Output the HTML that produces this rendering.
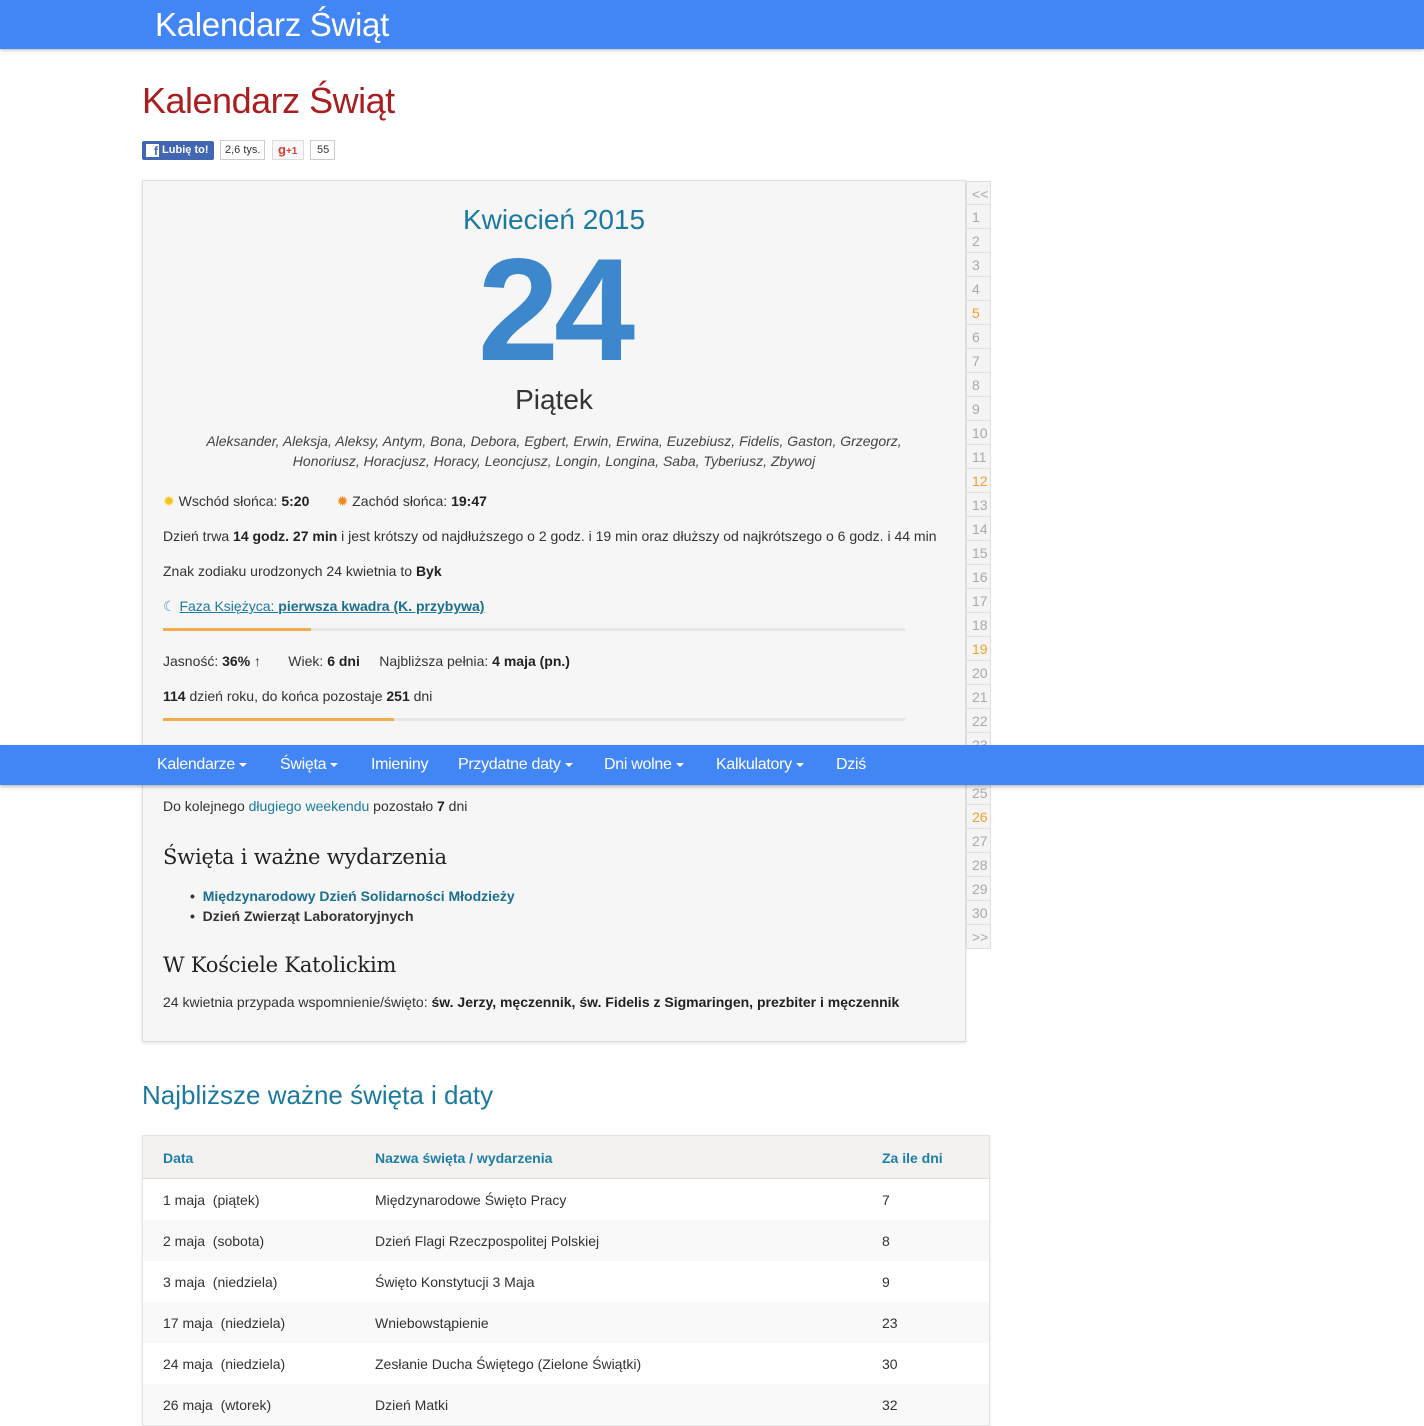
<!DOCTYPE html>
<html><head><meta charset="utf-8"><style>
*{margin:0;padding:0;box-sizing:border-box}
body{width:1424px;height:1424px;overflow:hidden;background:#fff;font-family:"Liberation Sans",Arial,sans-serif;color:#333;position:relative}
.a{position:absolute;white-space:nowrap}
.top{position:absolute;left:0;top:0;width:1424px;height:49px;background:#4285f4;box-shadow:0 1px 3px rgba(0,0,0,.3)}
.top span{position:absolute;left:155px;top:6px;font-size:33px;color:#fff;font-family:"Liberation Sans",sans-serif;letter-spacing:-0.3px}
.card{position:absolute;left:142px;top:180px;width:824px;height:862px;background:#f6f6f6;border:1px solid #ddd;box-shadow:0 1px 3px rgba(0,0,0,.12)}
.t{font-size:14px;color:#333}
b{color:#222}
.side{position:absolute;left:966px;top:181px;width:25px}
.side div{height:24px;border:1px solid #e0e0e0;border-top:none;background:#f4f4f4;color:#aaa;font-size:14px;padding:4px 0 0 5px}
.side div:first-child{border-top:1px solid #e0e0e0}
.side .o{color:#f0a030}
.nav{position:absolute;left:0;top:745px;width:1424px;height:40px;background:#4285f4;box-shadow:0 2px 3px rgba(0,0,0,.25)}
.nav span{position:absolute;top:11px;color:#fff;font-size:16px;letter-spacing:-0.3px}
.car{display:inline-block;border-left:4px solid transparent;border-right:4px solid transparent;border-top:4px solid #fff;vertical-align:middle;margin-left:4px}
.tbl{position:absolute;left:142px;top:1135px;width:848px;border:1px solid #e4e4e4;box-shadow:0 1px 3px rgba(0,0,0,.1)}
.row{height:41px;position:relative;font-size:14px;color:#333}
.row span{position:absolute;top:13px}
.hd{background:#f3f2f0;height:43px;border-bottom:1px solid #ddd;color:#1e7fa8;font-weight:bold}
.alt{background:#f9f9f9}
.bar{position:absolute;left:163px;width:742px;height:3px;background:#e6e6e6}
.bar i{display:block;height:3px;background:#f0ad4e}
h3{font-family:"DejaVu Serif","Liberation Serif",serif;font-weight:normal;font-size:21px;color:#222;letter-spacing:-0.2px}
</style></head><body>
<div class="top"><span>Kalendarz Świąt</span></div>
<div class="a" style="left:142px;top:80px;font-size:36px;color:#a91f1f;font-family:'Liberation Sans',sans-serif;letter-spacing:-0.5px">Kalendarz Świąt</div>
<div class="a" style="left:142px;top:141px;width:72px;height:19px;background:#4267b2;border-radius:2px;color:#fff;font-size:11px;font-weight:bold;padding:3px 0 0 4px"><span style="display:inline-block;width:13px;height:13px;background:#fff;color:#4267b2;font-size:12px;text-align:right;padding-right:1px;line-height:15px;vertical-align:-2px">f</span> Lubię to!</div>
<div class="a" style="left:220px;top:140px;width:45px;height:20px;border:1px solid #ccc;font-size:11px;color:#333;padding:3px 0 0 4px">2,6 tys.</div>
<div class="a" style="left:272px;top:140px;width:32px;height:20px;border:1px solid #ddd;background:#f8f8f8;font-size:13px;color:#d73d32;font-weight:bold;padding:1px 0 0 5px">g<span style="font-size:10px">+1</span></div>
<div class="a" style="left:310px;top:140px;width:25px;height:20px;border:1px solid #ccc;font-size:11px;color:#333;padding:3px 0 0 6px">55</div>

<div class="card"></div>
<div class="a" style="left:142px;width:824px;top:204px;text-align:center;font-size:28px;color:#1b7a9e">Kwiecień 2015</div>
<div class="a" style="left:142px;width:824px;top:226px;text-align:center;font-size:146px;font-weight:bold;color:#3d87cc;letter-spacing:-5px">24</div>
<div class="a" style="left:142px;width:824px;top:384px;text-align:center;font-size:28px;color:#333">Piątek</div>
<div class="a" style="left:142px;width:824px;top:431px;text-align:center;font-size:14px;font-style:italic;color:#444;line-height:20px;white-space:normal">Aleksander, Aleksja, Aleksy, Antym, Bona, Debora, Egbert, Erwin, Erwina, Euzebiusz, Fidelis, Gaston, Grzegorz,<br>Honoriusz, Horacjusz, Horacy, Leoncjusz, Longin, Longina, Saba, Tyberiusz, Zbywoj</div>
<div class="a t" style="left:163px;top:493px"><span style="color:#f6c21c">✹</span> Wschód słońca: <b>5:20</b> &nbsp; &nbsp; &nbsp; <span style="color:#f08a1c">✹</span> Zachód słońca: <b>19:47</b></div>
<div class="a t" style="left:163px;top:528px">Dzień trwa <b>14 godz. 27 min</b> i jest krótszy od najdłuższego o 2 godz. i 19 min oraz dłuższy od najkrótszego o 6 godz. i 44 min</div>
<div class="a t" style="left:163px;top:563px">Znak zodiaku urodzonych 24 kwietnia to <b>Byk</b></div>
<div class="a t" style="left:163px;top:598px;color:#1b7a9e"><span style="color:#5a8fd0">☾</span> <u>Faza Księżyca: <b style="color:#1b6f8e">pierwsza kwadra (K. przybywa)</b></u></div>
<div class="bar" style="top:628px"><i style="width:148px"></i></div>
<div class="a t" style="left:163px;top:653px">Jasność: <b>36%</b> ↑ &nbsp; &nbsp; &nbsp; Wiek: <b>6 dni</b> &nbsp; &nbsp; Najbliższa pełnia: <b>4 maja (pn.)</b></div>
<div class="a t" style="left:163px;top:688px"><b>114</b> dzień roku, do końca pozostaje <b>251</b> dni</div>
<div class="bar" style="top:718px"><i style="width:231px"></i></div>
<div class="a t" style="left:163px;top:798px">Do kolejnego <span style="color:#1b7a9e">długiego weekendu</span> pozostało <b>7</b> dni</div>
<h3 class="a" style="left:163px;top:845px">Święta i ważne wydarzenia</h3>
<div class="a t" style="left:190px;top:886px;font-weight:bold;line-height:20px">•&nbsp; <span style="color:#1b6f8e">Międzynarodowy Dzień Solidarności Młodzieży</span><br>•&nbsp; Dzień Zwierząt Laboratoryjnych</div>
<h3 class="a" style="left:163px;top:953px">W Kościele Katolickim</h3>
<div class="a t" style="left:163px;top:994px">24 kwietnia przypada wspomnienie/święto: <b>św. Jerzy, męczennik, św. Fidelis z Sigmaringen, prezbiter i męczennik</b></div>

<div class="side">
<div>&lt;&lt;</div><div>1</div><div>2</div><div>3</div><div>4</div><div class="o">5</div><div>6</div><div>7</div><div>8</div><div>9</div><div>10</div><div>11</div><div class="o">12</div><div>13</div><div>14</div><div>15</div><div>16</div><div>17</div><div>18</div><div class="o">19</div><div>20</div><div>21</div><div>22</div><div>23</div><div>24</div><div>25</div><div class="o">26</div><div>27</div><div>28</div><div>29</div><div>30</div><div>&gt;&gt;</div>
</div>

<div class="nav">
<span style="left:157px">Kalendarze<i class="car"></i></span>
<span style="left:280px">Święta<i class="car"></i></span>
<span style="left:371px">Imieniny</span>
<span style="left:458px">Przydatne daty<i class="car"></i></span>
<span style="left:604px">Dni wolne<i class="car"></i></span>
<span style="left:716px">Kalkulatory<i class="car"></i></span>
<span style="left:836px">Dziś</span>
</div>

<div class="a" style="left:142px;top:1080px;font-size:26px;color:#1b7a9e">Najbliższe ważne święta i daty</div>
<div class="tbl">
<div class="row hd"><span style="left:20px;top:14px">Data</span><span style="left:232px;top:14px">Nazwa święta / wydarzenia</span><span style="left:739px;top:14px">Za ile dni</span></div>
<div class="row"><span style="left:20px">1 maja&nbsp; (piątek)</span><span style="left:232px">Międzynarodowe Święto Pracy</span><span style="left:739px">7</span></div>
<div class="row alt"><span style="left:20px">2 maja&nbsp; (sobota)</span><span style="left:232px">Dzień Flagi Rzeczpospolitej Polskiej</span><span style="left:739px">8</span></div>
<div class="row"><span style="left:20px">3 maja&nbsp; (niedziela)</span><span style="left:232px">Święto Konstytucji 3 Maja</span><span style="left:739px">9</span></div>
<div class="row alt"><span style="left:20px">17 maja&nbsp; (niedziela)</span><span style="left:232px">Wniebowstąpienie</span><span style="left:739px">23</span></div>
<div class="row"><span style="left:20px">24 maja&nbsp; (niedziela)</span><span style="left:232px">Zesłanie Ducha Świętego (Zielone Świątki)</span><span style="left:739px">30</span></div>
<div class="row alt"><span style="left:20px">26 maja&nbsp; (wtorek)</span><span style="left:232px">Dzień Matki</span><span style="left:739px">32</span></div>
</div>
</body></html>
